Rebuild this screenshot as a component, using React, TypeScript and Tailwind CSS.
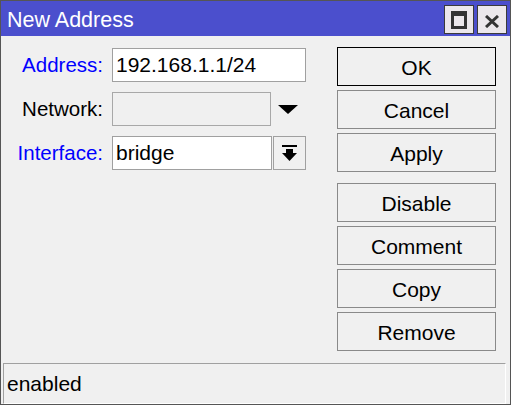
import React from "react";

const font = "font-['Liberation_Sans',Arial,sans-serif]";

function Btn({ label, def }: { label: string; def?: boolean }) {
  return (
    <div
      className={`h-[39px] w-[159px] flex items-center justify-center pt-[3px] bg-[#f0f0f0] text-[21px] text-black border ${
        def ? "border-black" : "border-[#8a8a8a]"
      }`}
    >
      {label}
    </div>
  );
}

export default function App() {
  return (
    <div
      className={`w-[511px] h-[405px] border border-[#555555] bg-[#f0f0f0] flex flex-col ${font}`}
    >
      {/* Title bar */}
      <div className="h-[35px] bg-[#4b4fcd] flex items-center pl-[6px] pr-[3px]">
        <span className="flex-1 text-white text-[21.5px] pt-[3px] leading-normal">New Address</span>
        <div className="flex gap-[3px] pt-[2px]">
          <div className="w-[30px] h-[29px] border border-[#3a3a3a] bg-[#ebe7eb] flex items-center justify-center">
            <svg width="16" height="18" viewBox="0 0 16 18">
              <path d="M0 0H16V18H0Z M3 5V15H13V5Z" fill="#333333" fillRule="evenodd" />
            </svg>
          </div>
          <div className="w-[30px] h-[29px] border border-[#3a3a3a] bg-[#ebe7eb] flex items-center justify-center pt-[3px]">
            <svg width="14" height="13" viewBox="0 0 14 13">
              <path d="M1 1L13 12M13 1L1 12" stroke="#333333" strokeWidth="3" />
            </svg>
          </div>
        </div>
      </div>

      {/* Body */}
      <div className="flex-1 flex">
        <div className="w-[336px] pt-[12px] flex flex-col gap-[10px]">
          <div className="flex items-center h-[34px]">
            <div className="w-[102px] text-right text-[20.5px] text-[#0000ff]">Address:</div>
            <div className="ml-[9px] w-[194px] h-[34px] bg-white border border-[#a0a0a0] flex items-center pl-[3px] text-[21px] text-black">
              192.168.1.1/24
            </div>
          </div>
          <div className="flex items-center h-[34px]">
            <div className="w-[102px] text-right text-[20.5px] text-black">Network:</div>
            <div className="ml-[9px] w-[159px] h-[34px] bg-[#f0f0f0] border border-[#a8a8a8]" />
            <svg className="ml-[7px]" width="20" height="9" viewBox="0 0 20 9">
              <polygon points="0,0 20,0 10,9" fill="#000000" />
            </svg>
          </div>
          <div className="flex items-center h-[34px]">
            <div className="w-[102px] text-right text-[20.5px] text-[#0000ff]">Interface:</div>
            <div className="ml-[9px] w-[160px] h-[34px] bg-white border border-[#a0a0a0] flex items-center pl-[3px] text-[21px] text-black">
              bridge
            </div>
            <div className="ml-[1px] w-[33px] h-[34px] bg-[#f0f0f0] border border-[#a0a0a0] flex items-center justify-center">
              <svg width="15" height="16" viewBox="0 0 15 16">
                <rect x="0" y="0" width="15" height="2" fill="#000000" />
                <polygon points="4,4 11,4 11,8 15,8 7.5,16 0,8 4,8" fill="#000000" />
              </svg>
            </div>
          </div>
        </div>
        <div className="w-[159px] pt-[11px] flex flex-col">
          <div className="flex flex-col gap-[4px]">
            <Btn label="OK" def />
            <Btn label="Cancel" />
            <Btn label="Apply" />
          </div>
          <div className="flex flex-col gap-[4px] mt-[11px]">
            <Btn label="Disable" />
            <Btn label="Comment" />
            <Btn label="Copy" />
            <Btn label="Remove" />
          </div>
        </div>
      </div>

      {/* Status bar */}
      <div className="h-[41px] ml-[2px] mr-[4px] border border-t-[#a0a0a0] border-l-[#a0a0a0] border-r-white border-b-white flex items-center pl-[3px] text-[21px] text-black">
        enabled
      </div>
    </div>
  );
}
